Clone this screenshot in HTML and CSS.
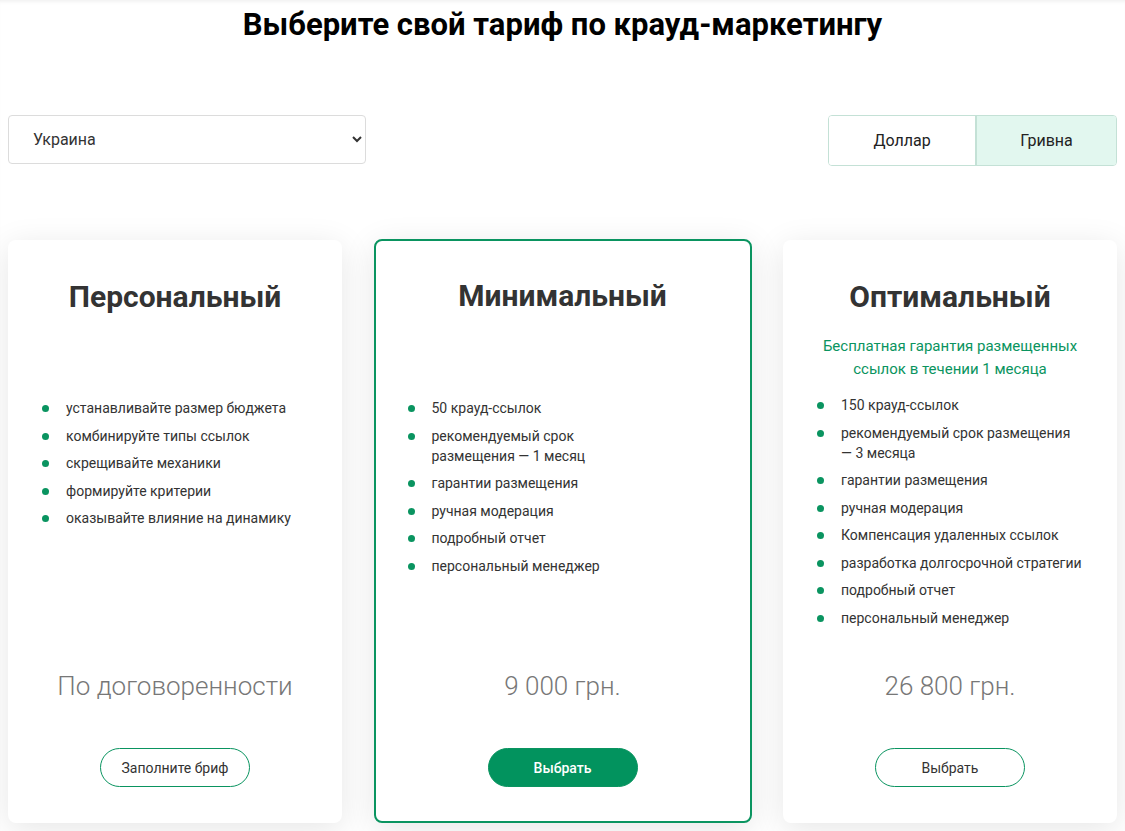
FILE: index.html
```html
<!DOCTYPE html>
<html lang="ru">
<head>
<meta charset="utf-8">
<title>Тарифы</title>
<link rel="stylesheet" href="styles.css">
</head>
<body>
<div class="page">
  <h1 class="page-title">Выберите свой тариф по крауд-маркетингу</h1>
  <div class="controls">
    <select class="country">
      <option>Украина</option>
      <option>Россия</option>
    </select>
    <div class="currency">
      <button class="cur-btn">Доллар</button>
      <button class="cur-btn cur-btn--active">Гривна</button>
    </div>
  </div>
  <div class="plans">
    <div class="card">
      <h2 class="card-title">Персональный</h2>
      <ul class="features">
        <li>устанавливайте размер бюджета</li>
        <li>комбинируйте типы ссылок</li>
        <li>скрещивайте механики</li>
        <li>формируйте критерии</li>
        <li>оказывайте влияние на динамику</li>
      </ul>
      <div class="price">По договоренности</div>
      <button class="btn">Заполните бриф</button>
    </div>
    <div class="card card--featured">
      <h2 class="card-title">Минимальный</h2>
      <ul class="features">
        <li>50 крауд-ссылок</li>
        <li>рекомендуемый срок<br>размещения — 1 месяц</li>
        <li>гарантии размещения</li>
        <li>ручная модерация</li>
        <li>подробный отчет</li>
        <li>персональный менеджер</li>
      </ul>
      <div class="price">9 000 грн.</div>
      <button class="btn btn--filled">Выбрать</button>
    </div>
    <div class="card card--wide-list">
      <h2 class="card-title card-title--sub">Оптимальный</h2>
      <p class="card-sub">Бесплатная гарантия размещенных ссылок в течении 1 месяца</p>
      <ul class="features">
        <li>150 крауд-ссылок</li>
        <li>рекомендуемый срок размещения — 3 месяца</li>
        <li>гарантии размещения</li>
        <li>ручная модерация</li>
        <li>Компенсация удаленных ссылок</li>
        <li>разработка долгосрочной стратегии</li>
        <li>подробный отчет</li>
        <li>персональный менеджер</li>
      </ul>
      <div class="price">26 800 грн.</div>
      <button class="btn">Выбрать</button>
    </div>
  </div>
</div>
</body>
</html>
```

FILE: styles.css
```css
* { box-sizing: border-box; }
html, body { margin: 0; padding: 0; background: #fff; }
body {
  font-family: Roboto, "Noto Sans", "Liberation Sans", sans-serif;
  color: #333;
  box-shadow: inset 0 4px 4px -3px rgba(0,0,0,0.08);
  min-height: 831px;
}
.page {
  padding: 8px 8px 0;
}
.page-title {
  margin: 0;
  font-size: 31px;
  line-height: 34px;
  font-weight: 700;
  color: #000;
  text-align: center;
}
.controls {
  margin-top: 73px;
  display: flex;
  justify-content: space-between;
  align-items: flex-start;
}
.country {
  width: 358px;
  height: 49px;
  border: 1px solid #dcdcdc;
  border-radius: 4px;
  background: #fff;
  padding: 0 8px 0 20px;
  font-family: Roboto, "Liberation Sans", sans-serif;
  font-size: 16px;
  color: #333;
}
.currency {
  display: flex;
  border: 1px solid #c4e1d6;
  border-radius: 4px;
  overflow: hidden;
}
.cur-btn {
  height: 49px;
  width: 146px;
  border: 0;
  background: #fff;
  font-family: Roboto, "Liberation Sans", sans-serif;
  font-size: 16px;
  color: #222;
  padding: 0;
}
.cur-btn--active {
  width: 141px;
  background: #e2f7ef;
  border-left: 2px solid #c4e1d6;
}
.plans {
  margin-top: 74px;
  display: grid;
  grid-template-columns: 334px 378px 334px;
  justify-content: space-between;
}
.card {
  background: #fff;
  border-radius: 8px;
  box-shadow: 0 6px 32px rgba(0,0,0,0.1);
  padding: 40px 0 36px;
  display: flex;
  flex-direction: column;
  align-items: center;
  min-height: 583px;
}
.card--featured {
  border: 2px solid #0a9460;
  padding-top: 38px;
  padding-bottom: 34px;
  margin-top: -1px;
}
.card-title {
  margin: 0 0 85px;
  font-size: 30px;
  line-height: 33px;
  font-weight: 700;
  color: #333;
  text-align: center;
}
.card--featured .card-title { margin-bottom: 86px; }
.card-title--sub {
  margin-bottom: 22px;
}
.card-sub {
  margin: 0 0 14px;
  padding: 0 30px;
  font-size: 15px;
  line-height: 23px;
  color: #0a9460;
  text-align: center;
}
.features {
  list-style: none;
  margin: 0;
  padding: 0 20px 0 34px;
  align-self: stretch;
  font-size: 14px;
  line-height: 20px;
  color: #333;
}
.card--featured .features { padding-left: 32px; }
.card--wide-list .features { padding-right: 33px; }
.features li {
  display: flex;
  margin-bottom: 7.5px;
}
.features li::before {
  content: "";
  flex-shrink: 0;
  width: 7px;
  height: 7px;
  border-radius: 50%;
  background: #0a9460;
  margin: 7px 17px 0 0;
}
.price {
  margin-top: auto;
  padding-top: 34px;
  font-size: 26px;
  line-height: 30px;
  font-weight: 300;
  color: #777;
  text-align: center;
}
.btn {
  margin-top: 47px;
  width: 150px;
  height: 39px;
  border: 1px solid #0a9460;
  border-radius: 20px;
  background: #fff;
  font-family: Roboto, "Liberation Sans", sans-serif;
  font-size: 14px;
  color: #333;
}
.btn--filled {
  background: #02935e;
  color: #fff;
  font-weight: 500;
}
```
